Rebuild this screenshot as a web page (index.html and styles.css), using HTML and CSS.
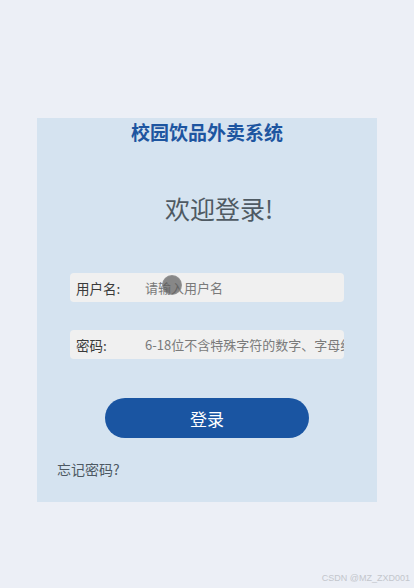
FILE: index.html
```html
<!DOCTYPE html>
<html lang="zh">
<head>
    <meta charset="UTF-8">
    <link rel="stylesheet" href="styles.css">
</head>
<body>
    <div class="login-box">
        <div class="login-title">校园饮品外卖系统</div>
        <div class="login-welcome">欢迎登录!</div>

        <div class="login-row">
            <label class="login-label">用户名:</label>
            <input type="text" name="username" placeholder="请输入用户名">
        </div>

        <div class="login-row login-row-pwd">
            <label class="login-label">密码:</label>
            <input type="password" name="password" placeholder="6-18位不含特殊字符的数字、字母组合">
        </div>

        <div class="login-btn-wrap">
            <button type="button" class="login-btn">登录</button>
        </div>

        <div class="login-forget">忘记密码?</div>
    </div>

    <div class="cursor-dot"></div>
    <div class="watermark">CSDN @MZ_ZXD001</div>
</body>
</html>
```

FILE: styles.css
```css
body {
    margin: 0;
    background-color: #eceff6;
    font-family: "Noto Sans CJK SC", "Noto Sans", sans-serif;
    height: 588px;
    position: relative;
    overflow: hidden;
}

.login-box {
    margin: 118px 0 0 37px;
    width: 340px;
    height: 384px;
    background-color: #d5e3f0;
    box-sizing: border-box;
    padding: 0 33px 0 33px;
}

.login-title {
    text-align: center;
    color: #1d55a0;
    font-size: 19px;
    font-weight: bold;
    line-height: 28px;
}

.login-welcome {
    text-align: center;
    color: #4f5a63;
    font-size: 25px;
    line-height: 36px;
    margin-top: 44px;
    padding-left: 24px;
}

.login-row {
    display: flex;
    align-items: center;
    height: 29px;
    margin-top: 47px;
    background-color: #f0f0f0;
    border-radius: 4px;
    padding-left: 6px;
    width: 274px;
    box-sizing: border-box;
    overflow: hidden;
}

.login-row-pwd {
    margin-top: 28px;
}

.login-label {
    width: 69px;
    flex-shrink: 0;
    font-size: 13.5px;
    color: #3a3a3a;
}

.login-row input {
    flex-grow: 1;
    min-width: 0;
    border: none;
    background: transparent;
    outline: none;
    padding: 0;
    font-family: "Noto Sans CJK SC", "Noto Sans", sans-serif;
    font-size: 13px;
    color: #333;
}

.login-row input::placeholder {
    color: #7a7a7a;
}

.login-btn-wrap {
    margin-top: 39px;
    padding-left: 35px;
}

.login-btn {
    width: 204px;
    height: 40px;
    border: none;
    border-radius: 20px;
    background-color: #1a55a2;
    color: #fff;
    font-family: "Noto Sans CJK SC", "Noto Sans", sans-serif;
    font-size: 17px;
    cursor: pointer;
}

.login-forget {
    margin: 21px 0 0 -13px;
    font-size: 14px;
    color: #4d5963;
}

.cursor-dot {
    position: absolute;
    left: 162px;
    top: 275px;
    width: 20px;
    height: 20px;
    border-radius: 50%;
    background-color: rgba(90, 90, 90, 0.7);
    border: 1px solid rgba(150, 150, 150, 0.6);
    box-sizing: border-box;
}

.watermark {
    position: absolute;
    right: 4px;
    bottom: 5px;
    font-family: "Liberation Sans", Arial, sans-serif;
    font-size: 9px;
    color: #c3c6cc;
}
```
